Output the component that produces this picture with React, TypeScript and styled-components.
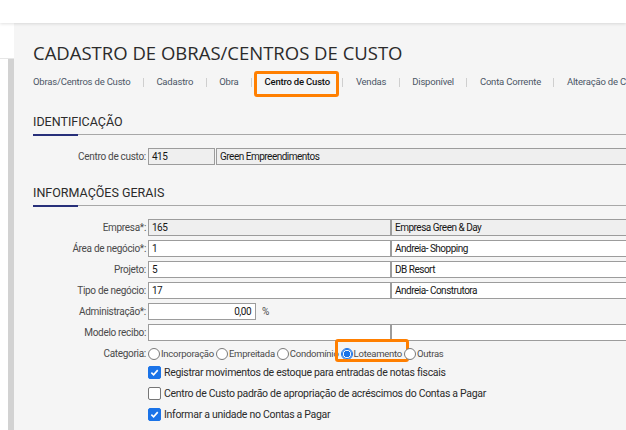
import React from "react";
import styled, { createGlobalStyle } from "styled-components";

const GlobalStyle = createGlobalStyle`
  html, body {
    margin: 0;
    padding: 0;
    background: #fff;
    overflow: hidden;
  }
  body {
    font-family: Roboto, "Liberation Sans", Arial, sans-serif;
    color: #333;
  }
`;

const Page = styled.div`
  width: 626px;
  height: 430px;
  display: flex;
  flex-direction: column;
  overflow: hidden;
`;

const TopBar = styled.div`
  height: 23px;
  flex: none;
  background: #fff;
  box-shadow: 0 1px 3px rgba(0, 0, 0, 0.12);
  position: relative;
  z-index: 1;
`;

const Body = styled.div`
  flex: 1;
  display: flex;
  min-height: 0;
`;

const SideStrip = styled.div`
  width: 14px;
  flex: none;
  display: flex;
  flex-direction: column;
  background: #fff;
`;

const SideTop = styled.div`
  height: 35px;
  border-bottom: 1px solid #e6e6e6;
`;

const SideBar = styled.div`
  flex: 1;
  margin-left: 8px;
  background: #d2d2d2;
`;

const Content = styled.div`
  flex: 1;
  background: #f5f5f5;
  padding: 18px 0 0 19px;
  overflow: hidden;
`;

const Title = styled.h1`
  margin: 0;
  font-family: "Open Sans", "Liberation Sans", sans-serif;
  font-weight: 400;
  font-size: 18.5px;
  line-height: 24px;
  color: #2b2b2b;
  white-space: nowrap;
`;

const Tabs = styled.nav`
  display: flex;
  align-items: center;
  height: 26px;
  margin-top: 4px;
  white-space: nowrap;
`;

const Tab = styled.span<{ $active?: boolean }>`
  position: relative;
  padding: 0 12.5px;
  font-size: 9.5px;
  line-height: 12px;
  letter-spacing: -0.2px;
  color: ${(p) => (p.$active ? "#111" : "#4b5565")};
  font-weight: ${(p) => (p.$active ? 500 : 400)};
  &:first-child {
    padding-left: 0;
  }
  ${(p) =>
    p.$active &&
    `
    &::after {
      content: "";
      position: absolute;
      left: 2px;
      right: 3px;
      top: -5px;
      bottom: -9px;
      border: 3px solid #ff7f00;
      border-radius: 3px;
    }
  `}
`;

const TabSep = styled.span`
  width: 1px;
  height: 9px;
  background: #cfcfcf;
  flex: none;
`;

const Section = styled.section<{ $top: number }>`
  margin-top: ${(p) => p.$top}px;
`;

const SectionTitle = styled.h2`
  position: relative;
  margin: 0 0 13px;
  padding-bottom: 5px;
  font-size: 12.5px;
  font-weight: 400;
  line-height: 14px;
  color: #2b2b2b;
  border-bottom: 1px solid #a8a8a8;
  &::after {
    content: "";
    position: absolute;
    left: 0;
    bottom: -2px;
    width: 45px;
    height: 2px;
    background: #27307a;
  }
`;

const Rows = styled.div`
  display: flex;
  flex-direction: column;
  gap: 4px;
`;

const Row = styled.div<{ $top?: number }>`
  display: grid;
  grid-template-columns: 113px auto;
  column-gap: 2px;
  align-items: center;
  min-height: 17px;
  margin-top: ${(p) => p.$top ?? 0}px;
`;

const Label = styled.label`
  font-size: 10px;
  letter-spacing: -0.3px;
  color: #4a4a4a;
  text-align: right;
  white-space: nowrap;
`;

const Fields = styled.div`
  display: flex;
  align-items: center;
  white-space: nowrap;
`;

const Field = styled.div<{ $w: number; $ro?: boolean; $right?: boolean; $gap?: number }>`
  box-sizing: border-box;
  width: ${(p) => p.$w}px;
  height: 17px;
  flex: none;
  margin-left: ${(p) => p.$gap ?? 0}px;
  padding: 0 4px 0 3px;
  border: 1px solid #9c9c9c;
  background: ${(p) => (p.$ro ? "#efefef" : "#fff")};
  font-size: 10px;
  letter-spacing: -0.5px;
  line-height: 15px;
  color: #161616;
  text-align: ${(p) => (p.$right ? "right" : "left")};
  overflow: hidden;
`;

const Unit = styled.span`
  margin-left: 6px;
  font-size: 10px;
  color: #4a4a4a;
`;

const Options = styled.div`
  display: flex;
  align-items: center;
  white-space: nowrap;
  height: 17px;
`;

const Option = styled.span<{ $marked?: boolean }>`
  position: relative;
  display: inline-flex;
  align-items: center;
  gap: 1px;
  height: 12px;
  margin-right: 2px;
  font-size: 9.5px;
  letter-spacing: -0.25px;
  color: #4a4a4a;
  ${(p) =>
    p.$marked &&
    `
    &::after {
      content: "";
      position: absolute;
      left: -6px;
      right: -7px;
      top: -9px;
      bottom: -2px;
      border: 3px solid #ff7f00;
      border-radius: 3px;
    }
  `}
`;

const Radio = styled.span<{ $on?: boolean }>`
  box-sizing: border-box;
  width: 12px;
  height: 12px;
  border-radius: 50%;
  border: 1px solid ${(p) => (p.$on ? "#1a73e8" : "#7a7a7a")};
  background: ${(p) =>
    p.$on ? "radial-gradient(circle, #1a73e8 0 3px, #fff 3.5px)" : "#fff"};
  ${(p) => (p.$on ? "box-shadow: inset 0 0 0 1px #1a73e8;" : "")}
`;

const Checks = styled.div`
  display: flex;
  flex-direction: column;
  gap: 8px;
  margin-top: 4px;
  padding-left: 115px;
`;

const CheckRow = styled.label`
  display: flex;
  align-items: center;
  gap: 3px;
  font-size: 10.5px;
  letter-spacing: -0.3px;
  color: #2b2b2b;
  white-space: nowrap;
  height: 13px;
`;

const Box = styled.span<{ $on?: boolean }>`
  box-sizing: border-box;
  width: 13px;
  height: 13px;
  flex: none;
  border-radius: 2px;
  border: 1px solid ${(p) => (p.$on ? "#1a73e8" : "#767676")};
  background: ${(p) => (p.$on ? "#1a73e8" : "#fff")};
  display: flex;
  align-items: center;
  justify-content: center;
`;

const tabs = [
  "Obras/Centros de Custo",
  "Cadastro",
  "Obra",
  "Centro de Custo",
  "Vendas",
  "Disponível",
  "Conta Corrente",
  "Alteração de Código",
];

const categorias = ["Incorporação", "Empreitada", "Condomínio", "Loteamento", "Outras"];

function Check({ on, children }: { on?: boolean; children: React.ReactNode }) {
  return (
    <CheckRow>
      <Box $on={on}>
        {on && (
          <svg width="9" height="9" viewBox="0 0 10 10">
            <path d="M1.5 5.2 L4 7.6 L8.6 2.4" fill="none" stroke="#fff" strokeWidth="1.8" />
          </svg>
        )}
      </Box>
      {children}
    </CheckRow>
  );
}

export default function App() {
  return (
    <Page>
      <GlobalStyle />
      <TopBar />
      <Body>
        <SideStrip>
          <SideTop />
          <SideBar />
        </SideStrip>
        <Content>
          <Title>CADASTRO DE OBRAS/CENTROS DE CUSTO</Title>
          <Tabs>
            {tabs.map((t, i) => (
              <React.Fragment key={t}>
                {i > 0 && <TabSep />}
                <Tab $active={t === "Centro de Custo"}>{t}</Tab>
              </React.Fragment>
            ))}
          </Tabs>

          <Section $top={20}>
            <SectionTitle>IDENTIFICAÇÃO</SectionTitle>
            <Rows>
              <Row>
                <Label>Centro de custo:</Label>
                <Fields>
                  <Field $w={67} $ro>415</Field>
                  <Field $w={420} $ro $gap={1}>Green Empreendimentos</Field>
                </Fields>
              </Row>
            </Rows>
          </Section>

          <Section $top={21}>
            <SectionTitle>INFORMAÇÕES GERAIS</SectionTitle>
            <Rows>
              <Row>
                <Label>Empresa*:</Label>
                <Fields>
                  <Field $w={243} $ro>165</Field>
                  <Field $w={300} $ro>Empresa Green &amp; Day</Field>
                </Fields>
              </Row>
              <Row>
                <Label>Área de negócio*:</Label>
                <Fields>
                  <Field $w={243}>1</Field>
                  <Field $w={300}>Andreia- Shopping</Field>
                </Fields>
              </Row>
              <Row>
                <Label>Projeto:</Label>
                <Fields>
                  <Field $w={243}>5</Field>
                  <Field $w={300}>DB Resort</Field>
                </Fields>
              </Row>
              <Row>
                <Label>Tipo de negócio:</Label>
                <Fields>
                  <Field $w={243}>17</Field>
                  <Field $w={300}>Andreia- Construtora</Field>
                </Fields>
              </Row>
              <Row>
                <Label>Administração*:</Label>
                <Fields>
                  <Field $w={108} $right>0,00</Field>
                  <Unit>%</Unit>
                </Fields>
              </Row>
              <Row>
                <Label>Modelo recibo:</Label>
                <Fields>
                  <Field $w={243} />
                  <Field $w={300} />
                </Fields>
              </Row>
            </Rows>
            <Row $top={4}>
              <Label>Categoria:</Label>
              <Options>
                {categorias.map((c) => (
                  <Option key={c} $marked={c === "Loteamento"}>
                    <Radio $on={c === "Loteamento"} />
                    {c}
                  </Option>
                ))}
              </Options>
            </Row>
            <Checks>
              <Check on>Registrar movimentos de estoque para entradas de notas fiscais</Check>
              <Check>Centro de Custo padrão de apropriação de acréscimos do Contas a Pagar</Check>
              <Check on>Informar a unidade no Contas a Pagar</Check>
            </Checks>
          </Section>
        </Content>
      </Body>
    </Page>
  );
}
